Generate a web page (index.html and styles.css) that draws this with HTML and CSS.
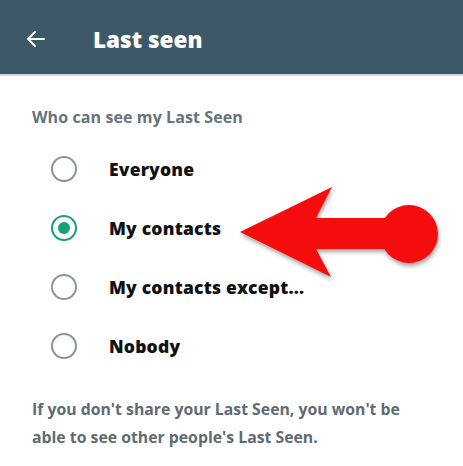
FILE: index.html
```html
<!DOCTYPE html>
<html>
<head>
    <title>Last seen</title>
    <link rel="stylesheet" href="styles.css">
</head>
<body>
    <div class="topbar">
        <svg class="back" width="24" height="24" viewBox="0 0 24 24">
            <path d="M20 12H5M11 5l-7 7 7 7" fill="none" stroke="#fff" stroke-width="2" stroke-linecap="round" stroke-linejoin="round"/>
        </svg>
        <h1>Last seen</h1>
    </div>

    <div class="content">
        <p class="caption">Who can see my Last Seen</p>

        <div class="options">
            <div class="option">
                <span class="radio"></span>
                <span class="label">Everyone</span>
            </div>
            <div class="option">
                <span class="radio checked"></span>
                <span class="label">My contacts</span>
            </div>
            <div class="option">
                <span class="radio"></span>
                <span class="label">My contacts except...</span>
            </div>
            <div class="option">
                <span class="radio"></span>
                <span class="label">Nobody</span>
            </div>
        </div>

        <p class="note">If you don't share your Last Seen, you won't be able to see other people's Last Seen.</p>
    </div>

    <!-- red annotation arrow -->
    <svg class="pointer" width="463" height="466" viewBox="0 0 463 466">
        <defs>
            <filter id="shadow" x="-10%" y="-10%" width="120%" height="130%">
                <feDropShadow dx="1" dy="3" stdDeviation="2" flood-color="#000" flood-opacity="0.35"/>
            </filter>
        </defs>
        <g filter="url(#shadow)" fill="#f50a0a">
            <path d="M240 232 L332 187 L316 218 L390 218 L390 249 L316 249 L331 277 Z"/>
            <circle cx="409" cy="234" r="29"/>
        </g>
    </svg>
</body>
</html>
```

FILE: styles.css
```css
body {
    margin: 0;
    padding: 0;
    background-color: #fff;
    font-family: "Open Sans", Lato, sans-serif;
    width: 463px;
    height: 466px;
    overflow: hidden;
    position: relative;
}

.topbar {
    background-color: #3d5867;
    height: 74px;
    border-bottom: 2px solid #d3d7dd;
    display: flex;
    align-items: center;
    padding-left: 24px;
}

.back {
    margin-top: 4px;
}

.topbar h1 {
    margin: 0 0 0 45px;
    color: #fff;
    font-size: 22.5px;
    font-weight: 800;
    padding-top: 4px;
}

.content {
    padding-left: 32px;
}

.caption {
    margin: 29px 0 0;
    line-height: 24px;
    font-size: 16px;
    font-weight: 700;
    letter-spacing: 0.1px;
    color: #65737b;
}

.options {
    margin-top: 10px;
    padding-left: 19px;
}

.option {
    height: 59px;
    display: flex;
    align-items: center;
}

.radio {
    width: 26px;
    height: 26px;
    box-sizing: border-box;
    border: 2.5px solid #8a9398;
    border-radius: 50%;
    display: flex;
    align-items: center;
    justify-content: center;
}

.radio.checked {
    border-color: #15a07a;
}

.radio.checked::after {
    content: "";
    width: 12px;
    height: 12px;
    border-radius: 50%;
    background-color: #15a07a;
}

.label {
    margin-left: 32px;
    font-size: 17.5px;
    font-weight: 800;
    letter-spacing: 0.2px;
    color: #111;
}

.note {
    margin: 20px 0 0;
    width: 390px;
    line-height: 28px;
    font-size: 15.8px;
    font-weight: 700;
    color: #5f6b73;
}

.pointer {
    position: absolute;
    left: 0;
    top: 0;
}
```
